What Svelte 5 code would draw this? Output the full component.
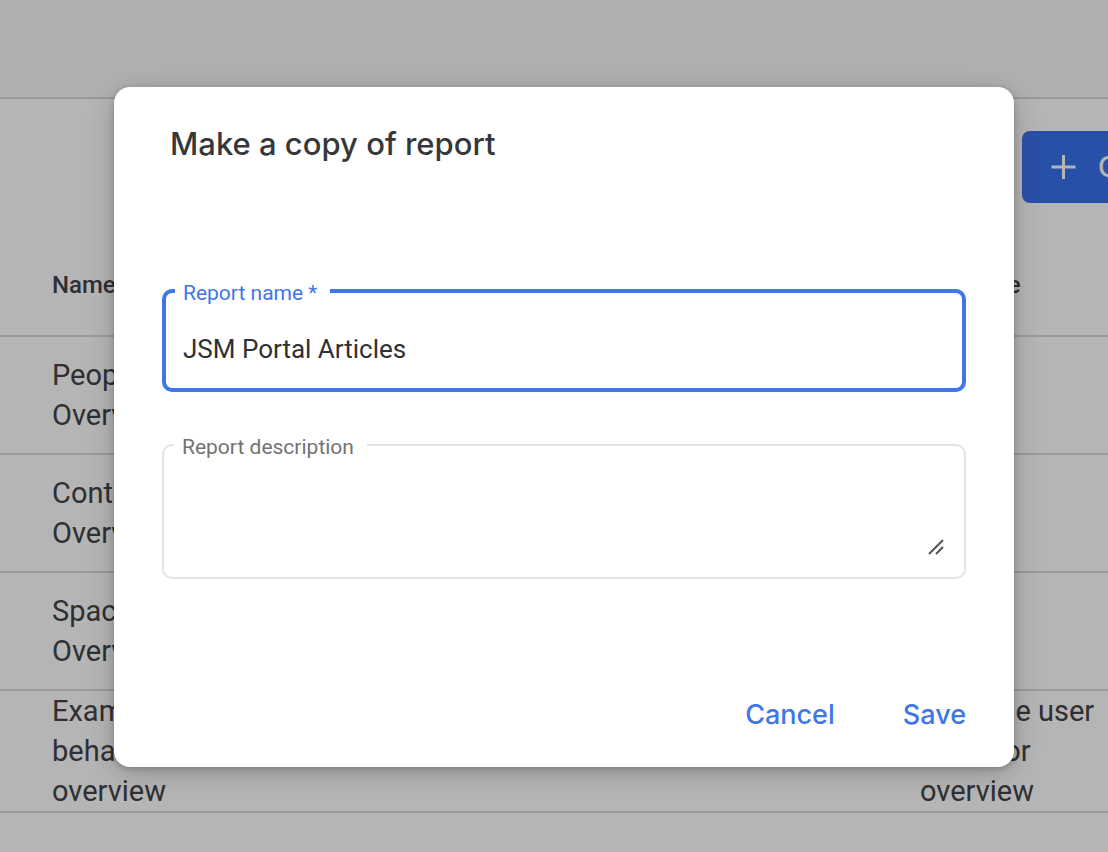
<script lang="ts">
  interface Row {
    name: string
    template?: string
  }

  const rows: Row[] = [
    {name: 'People\nOverview'},
    {name: 'Content\nOverview'},
    {name: 'Space\nOverview'},
    {
      name: 'Example user\nbehavior\noverview',
      template: 'Example user\nbehavior\noverview',
    },
  ];

  let open = $state(true);
  let reportName = $state('JSM Portal Articles');
  let description = $state('');

  function close() {
    open = false;
  }

  function save(e: SubmitEvent) {
    e.preventDefault();
    close();
  }
</script>

<div class="viewport">
  <div class="page" inert={open}>
    <header class="topbar"></header>

    <div class="toolbar">
      <button class="create" type="button" onclick={() => (open = true)}>
        <svg width="26" height="26" viewBox="0 0 26 26" aria-hidden="true">
          <path d="M13.5 1v24M1.5 13h24" fill="none" stroke="currentColor" stroke-width="3" />
        </svg>
        Create
      </button>
    </div>

    <table>
      <thead>
        <tr>
          <th class="col-name">Name</th>
          <th>Template</th>
        </tr>
      </thead>
      <tbody>
        {#each rows as row}
          <tr>
            <td>{row.name}</td>
            <td>{row.template ?? ''}</td>
          </tr>
        {/each}
      </tbody>
    </table>
  </div>

  {#if open}
    <div class="backdrop">
      <div class="dialog" role="dialog" aria-modal="true" aria-labelledby="dialog-title">
        <h2 id="dialog-title">Make a copy of report</h2>
        <form onsubmit={save}>
          <fieldset class="field focused">
            <legend><label for="report-name">Report name *</label></legend>
            <input id="report-name" type="text" bind:value={reportName} />
          </fieldset>

          <fieldset class="field">
            <legend><label for="report-description">Report description</label></legend>
            <textarea id="report-description" bind:value={description}></textarea>
            <svg class="grip" width="16" height="16" viewBox="0 0 16 16" aria-hidden="true">
              <path d="M1 15L15 1M8 15l7-7" fill="none" stroke="#555" stroke-width="2" />
            </svg>
          </fieldset>

          <div class="actions">
            <button type="button" onclick={close}>Cancel</button>
            <button type="submit">Save</button>
          </div>
        </form>
      </div>
    </div>
  {/if}
</div>

<style>
  :global(body) {
    margin: 0;
    background: #fff;
  }

  .viewport {
    position: relative;
    min-height: 100vh;
    overflow: hidden;
    font-family: Roboto, sans-serif;
    color: #434448;
  }

  /* the list is wider than the window and runs off its right edge */
  .page {
    margin-right: -148px;
  }

  .topbar {
    height: 97px;
    background: #f8f8f8;
    border-bottom: 2px solid #d9d9d9;
  }

  .toolbar {
    display: flex;
    justify-content: flex-end;
    padding: 32px 40px 32px 52px;
  }

  .create {
    display: flex;
    align-items: center;
    gap: 22px;
    width: 194px;
    height: 72px;
    padding: 0 28px;
    border: 0;
    border-radius: 8px;
    background: #3b71ed;
    color: #fff;
    font: 500 28px/40px Inter, sans-serif;
  }

  .create svg {
    flex: none;
  }

  table {
    width: 100%;
    table-layout: fixed;
    border-collapse: separate;
    border-spacing: 0;
  }

  th,
  td {
    padding: 0;
    border-bottom: 2px solid #d9d9d9;
    text-align: left;
    vertical-align: middle;
  }

  th {
    height: 100px;
    font-size: 24px;
    font-weight: 500;
  }

  td {
    height: 116px;
    font-size: 29px;
    line-height: 40px;
    white-space: pre-line;
  }

  th:first-child,
  td:first-child {
    padding-left: 52px;
  }

  th:last-child {
    width: 336px;
  }

  .backdrop {
    position: absolute;
    inset: 0;
    display: flex;
    align-items: center;
    justify-content: center;
    padding: 2px 0 0 20px;
    background: rgba(0, 0, 0, 0.29);
  }

  .dialog {
    box-sizing: border-box;
    width: 100%;
    max-width: 900px;
    padding: 36px 48px 32px;
    border-radius: 16px;
    background: #fff;
    box-shadow: 0 2px 6px rgba(0, 0, 0, 0.2), 0 6px 28px rgba(0, 0, 0, 0.2);
  }

  h2 {
    margin: 0 8px 112px;
    color: #36373a;
    font: 500 31px/42px Inter, sans-serif;
  }

  .field {
    position: relative;
    min-width: 0;
    margin: 0 0 39px;
    padding: 0 10px;
    border: 2px solid #e3e3e3;
    border-radius: 10px;
    color: #737373;
  }

  .field.focused {
    padding: 0 9px;
    border: 4px solid #3f76e8;
    color: #3f76e8;
  }

  legend {
    padding: 4px 13px 0 8px;
    font-size: 21px;
    line-height: 24px;
  }

  input,
  textarea {
    display: block;
    box-sizing: border-box;
    width: 100%;
    border: 0;
    outline: 0;
    background: none;
    color: #2f3033;
    font: 26px/40px Roboto, sans-serif;
  }

  input {
    height: 83px;
    padding: 5px 8px 0;
  }

  textarea {
    height: 118px;
    padding: 16px 8px;
    resize: none;
  }

  .grip {
    position: absolute;
    right: 20px;
    bottom: 22px;
  }

  .actions {
    display: flex;
    justify-content: flex-end;
    gap: 68px;
    margin-top: 116px;
  }

  .actions button {
    padding: 0;
    border: 0;
    background: none;
    color: #3f76e8;
    font: 500 27px/40px Inter, sans-serif;
    cursor: pointer;
  }
</style>
